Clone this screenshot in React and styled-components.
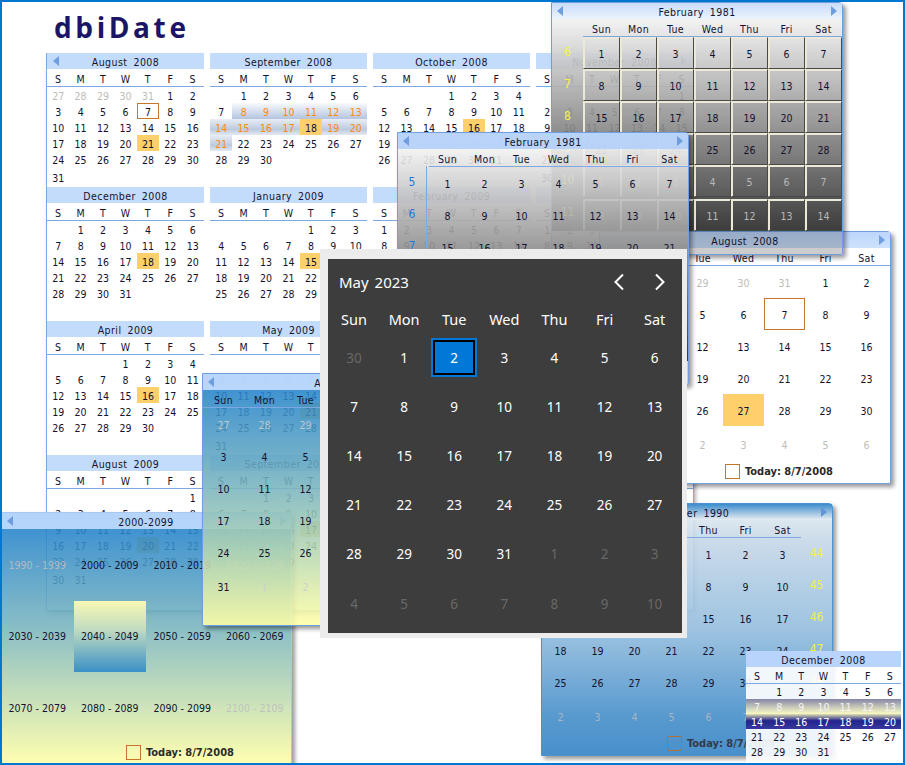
import React from "react";
import styled, { createGlobalStyle, css } from "styled-components";

const Global = createGlobalStyle`
  html, body { margin: 0; padding: 0; background: #fff; }
  #root { width: 905px; height: 765px; }
`;

const UI_FONT = `"DejaVu Sans Condensed", "DejaVu Sans", Tahoma, sans-serif`;
const INK = "#14122e";
const LINE = "#7ea8e2";

const Desktop = styled.div`
  position: relative;
  width: 905px;
  height: 765px;
  overflow: hidden;
  background: #fff;
  font-family: ${UI_FONT};
  font-size: 10.5px;
  color: ${INK};
  &::after {
    content: "";
    position: absolute;
    inset: 0;
    border: 2px solid #0078d0;
    z-index: 50;
    pointer-events: none;
  }
`;

const Brand = styled.h1`
  margin: 0;
  height: 53px;
  box-sizing: border-box;
  padding: 10px 0 0 54px;
  font-family: "Open Sans", "DejaVu Sans", sans-serif;
  font-weight: 700;
  font-size: 28px;
  line-height: 34px;
  letter-spacing: 3.6px;
  color: #1c1464;
`;

const Sheet = styled.div`
  display: grid;
  grid-template-columns: repeat(4, 157px);
  column-gap: 6px;
  width: 646px;
  margin-left: 46px;
  padding-bottom: 21px;
  border-left: 1px solid ${LINE};
  border-right: 1px solid ${LINE};
  border-bottom: 1px solid ${LINE};
  box-shadow: 2px 3px 4px rgba(0, 0, 0, 0.3);
`;

const MiniMonth = styled.section`
  height: 134px;
`;

const MonthBar = styled.div`
  position: relative;
  height: 16px;
  box-sizing: border-box;
  padding-top: 1px;
  display: flex;
  align-items: center;
  justify-content: center;
  background: ${(p) => p.$bg || "#c4dcfc"};
  letter-spacing: 0.45px;
  word-spacing: 2.5px;
  white-space: nowrap;
`;

const ArrowSlot = styled.svg`
  position: absolute;
  top: ${(p) => p.$top ?? 3}px;
  ${(p) => (p.$side === "left" ? css`left: ${p.$inset ?? 6}px;` : css`right: ${p.$inset ?? 6}px;`)}
  fill: ${(p) => p.$color || "#6f9ddf"};
`;

const Arrow = ({ side, top, inset, color }) => (
  <ArrowSlot $side={side} $top={top} $inset={inset} $color={color} width="6" height="10" viewBox="0 0 6 10">
    <polygon points={side === "left" ? "6,0 6,10 0,5" : "0,0 0,10 6,5"} />
  </ArrowSlot>
);

const DowRow = styled.div`
  display: grid;
  grid-template-columns: repeat(7, ${(p) => p.$cw});
  height: ${(p) => p.$h || 18}px;
  box-sizing: border-box;
  margin-left: ${(p) => p.$left || 0}px;
  margin-right: ${(p) => p.$right || 0}px;
  padding-top: 2px;
  border-bottom: 1px solid ${LINE};
  align-items: center;
  justify-items: center;
`;

const Dow = styled.span`
  letter-spacing: 0.35px;
`;

const DayGrid = styled.div`
  display: grid;
  grid-template-columns: repeat(7, ${(p) => p.$cw});
  grid-auto-rows: ${(p) => p.$rh}px;
`;

const bands = {
  soft: css`background: linear-gradient(#f8fafd, #b4c4de); color: #ff8a0c;`,
  softLast: css`background: linear-gradient(#e8edf5, #bccade 65%, #e4e9f2); color: #ff8a0c;`,
  neonTop: css`background: linear-gradient(#8585a8, #c9c9b8 55%, #fbfbc4); color: #f4f4f4;`,
  neonBottom: css`background: linear-gradient(#e0e0b0, #23238e 45%, #3838a0); color: #fff;`,
};

const Day = styled.div`
  box-sizing: border-box;
  height: ${(p) => p.$rh}px;
  display: flex;
  align-items: center;
  justify-content: center;
  padding-top: ${(p) => p.$pad ?? 2}px;
  color: ${(p) => (p.$other ? p.$otherColor || "#bdbdb6" : "inherit")};
  margin-top: ${(p) => (p.$gap ? 2 : 0)}px;
  ${(p) => p.$band && bands[p.$band]}
  ${(p) => p.$selected && css`background: #fdd06c; color: #14122e;`}
  ${(p) => p.$today && css`outline: 1px solid #c4762a; outline-offset: -1px;`}
  ${(p) =>
    p.$bevel &&
    css`
      background: rgba(255, 255, 255, 0.03);
      border: 1px solid #ece9d8;
      border-right-color: #4a4a44;
      border-bottom-color: #4a4a44;
      box-shadow: inset 1px 1px 0 #ece9d8;
    `}
`;

const Window = styled.section`
  position: absolute;
  left: ${(p) => p.$x}px;
  top: ${(p) => p.$y}px;
  z-index: ${(p) => p.$z};
  width: 292px;
  height: ${(p) => p.$h || 253}px;
  box-sizing: border-box;
  display: flex;
  flex-direction: column;
  border: 1px solid ${(p) => p.$edge || "#6f9fe0"};
  border-top-right-radius: 4px;
  border-bottom-right-radius: 2px;
  background: ${(p) => p.$bg};
  box-shadow: 3px 3px 4px rgba(0, 0, 0, 0.4);
`;

const WinBody = styled.div`
  display: flex;
`;

const WeekCol = styled.div`
  width: ${(p) => (p.$rule ? 28 : 31)}px;
  margin-right: ${(p) => (p.$rule ? 2 : 0)}px;
  margin-top: -1px;
  display: grid;
  grid-auto-rows: 32px;
  justify-items: center;
  align-items: center;
  border-right: ${(p) => (p.$rule ? `1px solid ${LINE}` : "none")};
  color: ${(p) => p.$color};
  font-size: 12px;
`;

const TodayRow = styled.div`
  margin-top: auto;
  margin-bottom: 4px;
  padding-left: 125px;
  height: 16px;
  display: flex;
  align-items: center;
  gap: 5px;
  font-weight: 700;
  font-size: 11px;
  color: ${(p) => p.$color || "#2a2a2a"};
`;

const TodayBox = styled.span`
  width: 15px;
  height: 15px;
  box-sizing: border-box;
  border: 1px solid ${(p) => p.$color || "#c4762a"};
`;

const DecadeGrid = styled.div`
  display: grid;
  grid-template-columns: repeat(4, 72.5px);
  grid-auto-rows: 71.5px;
`;

const Decade = styled.div`
  display: flex;
  align-items: center;
  justify-content: center;
  color: ${(p) => (p.$other ? "rgba(190,190,190,.9)" : INK)};
  ${(p) => p.$selected && css`background: linear-gradient(#f8f8b4, #c2dcc0 40%, #3a90c8);`}
`;

const Popup = styled.section`
  position: absolute;
  left: 320px;
  top: 249px;
  z-index: 20;
  width: 367px;
  height: 389px;
  box-sizing: border-box;
  padding: 10px 5px 5px 8px;
  background: #ececec;
`;

const PopupPanel = styled.div`
  height: 100%;
  box-sizing: border-box;
  background: #3d3d3d;
  color: #fff;
  font-family: "Noto Sans", "Open Sans", sans-serif;
  font-size: 13.5px;
  padding-left: 1px;
`;

const PopupHead = styled.header`
  height: 45px;
  display: flex;
  align-items: center;
  justify-content: space-between;
  padding: 1px 16px 0 10px;
  box-sizing: border-box;
  font-size: 15px;
  word-spacing: 2px;
`;

const Nav = styled.nav`
  display: flex;
  gap: 29px;
  margin-top: -1px;
`;

const Chevrons = styled.svg`
  fill: none;
  stroke: #fff;
  stroke-width: 2;
  display: block;
`;

const PopupDows = styled.div`
  display: grid;
  grid-template-columns: repeat(7, 50.1px);
  height: 29px;
  align-items: center;
  justify-items: center;
  font-size: 14.5px;
`;

const PopupGrid = styled.div`
  display: grid;
  grid-template-columns: repeat(7, 50.1px);
  grid-auto-rows: 49px;
  justify-items: center;
  align-items: center;
`;

const PopupDay = styled.div`
  box-sizing: border-box;
  width: 46px;
  height: 39px;
  display: flex;
  align-items: center;
  justify-content: center;
  color: ${(p) => (p.$other ? "#686868" : "#fff")};
  margin-top: ${(p) => (p.$gap ? 3 : 0)}px;
  ${(p) =>
    p.$selected &&
    css`
      background: #0078d7;
      box-shadow: inset 0 0 0 2px #0078d7, inset 0 0 0 4px #000;
    `}
`;

const Small = styled.section`
  position: absolute;
  left: 746px;
  top: 651px;
  z-index: 30;
  width: 155px;
  height: 114px;
  background: rgba(255, 255, 255, 0.9);
`;

const HEAD_SHORT = ["S", "M", "T", "W", "T", "F", "S"];
const HEAD_LONG = ["Sun", "Mon", "Tue", "Wed", "Thu", "Fri", "Sat"];
const NAMES = ["January", "February", "March", "April", "May", "June", "July", "August", "September", "October", "November", "December"];

const SKY = "linear-gradient(rgba(24,124,204,.88), rgba(120,180,190,.88) 45%, rgba(255,255,165,.88))";

function monthCells(year, month) {
  const first = new Date(year, month, 1);
  const start = 1 - first.getDay();
  const out = [];
  for (let i = 0; i < 42; i++) {
    const d = new Date(year, month, start + i);
    out.push({ n: d.getDate(), other: d.getMonth() !== month, row: Math.floor(i / 7), date: d });
  }
  return out;
}

function thirdThursday(year, month) {
  const w = new Date(year, month, 1).getDay();
  return 1 + ((4 - w + 7) % 7) + 14;
}

const MONTHS = [
  [2008, 7], [2008, 8], [2008, 9], [2008, 10],
  [2008, 11], [2009, 0], [2009, 1], [2009, 2],
  [2009, 3], [2009, 4], [2009, 5], [2009, 6],
  [2009, 7], [2009, 8], [2009, 9], [2009, 10],
];

function sepBand(y, m, n) {
  if (y !== 2008 || m !== 8) return null;
  if (n >= 8 && n <= 13) return "soft";
  if (n >= 14 && n <= 21) return "softLast";
  return null;
}

function SheetMonth({ year, month, index }) {
  const sel = thirdThursday(year, month);
  const cells = monthCells(year, month).filter((c) => c.row < 6);
  const showOther = index === 0;
  return (
    <MiniMonth>
      <MonthBar>
        {index === 0 && <Arrow side="left" />}
        {NAMES[month]}  {year}
        {index === 3 && <Arrow side="right" />}
      </MonthBar>
      <DowRow $cw="1fr" $h={18}>
        {HEAD_SHORT.map((d, i) => <Dow key={i}>{d}</Dow>)}
      </DowRow>
      <DayGrid $cw="1fr" $rh={16}>
        {cells.map((c, i) => {
          if (c.other && !(showOther && c.row === 0)) return <div key={i} />;
          return (
            <Day
              key={i}
              $rh={16}
              $gap={c.row === 5}
              $other={c.other}
              $selected={!c.other && c.n === sel}
              $today={year === 2008 && month === 7 && c.n === 7 && !c.other}
              $band={!c.other ? sepBand(year, month, c.n) : null}
            >
              {c.n}
            </Day>
          );
        })}
      </DayGrid>
    </MiniMonth>
  );
}

function CalendarWindow({
  x, y, z, bg, headBg, edge, year, month, cw = 37, week, weekSide, weekRule, weekColor,
  bevel, other, today, selected, footer, footerColor, boxColor, arrows = ["left", "right"], arrowColor,
}) {
  const cells = monthCells(year, month);
  const left = weekSide === "left" ? 31 : 0;
  const right = weekSide === "right" ? 31 : 0;
  const weeks = week ? Array.from({ length: 6 }, (_, i) => week + i) : null;
  const wk = weeks && (
    <WeekCol $rule={weekRule} $color={weekColor}>
      {weeks.map((n) => <span key={n}>{n}</span>)}
    </WeekCol>
  );
  return (
    <Window $x={x} $y={y} $z={z} $bg={bg} $edge={edge}>
      <MonthBar $bg={headBg}>
        {arrows.includes("left") && <Arrow side="left" inset={5} color={arrowColor} />}
        {NAMES[month]}  {year}
        {arrows.includes("right") && <Arrow side="right" inset={5} color={arrowColor} />}
      </MonthBar>
      <DowRow $cw={`${cw}px`} $left={left} $right={right}>
        {HEAD_LONG.map((d) => <Dow key={d}>{d}</Dow>)}
      </DowRow>
      <WinBody>
        {weekSide === "left" && wk}
        <DayGrid $cw={`${cw}px`} $rh={32}>
          {cells.map((c, i) => (
            <Day
              key={i}
              $rh={32}
              $gap={c.row === 5}
              $other={c.other}
              $otherColor={other}
              $bevel={bevel}
              $selected={!c.other && c.n === selected}
              $today={!c.other && c.n === today}
            >
              {c.n}
            </Day>
          ))}
        </DayGrid>
        {weekSide === "right" && wk}
      </WinBody>
      {footer && (
        <TodayRow $color={footerColor}>
          <TodayBox $color={boxColor} />
          Today: 8/7/2008
        </TodayRow>
      )}
    </Window>
  );
}

const DECADES = [
  ["1990 - 1999", true], ["2000 - 2009"], ["2010 - 2019"], ["2020 - 2029", false, true],
  ["2030 - 2039"], ["2040 - 2049", false, false, true], ["2050 - 2059"], ["2060 - 2069"],
  ["2070 - 2079"], ["2080 - 2089"], ["2090 - 2099"], ["2100 - 2109", true],
];

function DecadeWindow() {
  return (
    <Window $x={0} $y={512} $z={6} $edge="#a9c6ee" $bg={SKY}>
      <MonthBar $bg="rgba(198,222,255,.88)">
        <Arrow side="left" inset={6} />
        2000-2099
        <Arrow side="right" inset={5} />
      </MonthBar>
      <DecadeGrid>
        {DECADES.map(([label, other, faint, selected]) => (
          <Decade key={label} $other={other || faint} $selected={selected}>{label}</Decade>
        ))}
      </DecadeGrid>
      <TodayRow>
        <TodayBox />
        Today: 8/7/2008
      </TodayRow>
    </Window>
  );
}

function DarkPopup() {
  const cells = monthCells(2023, 4);
  return (
    <Popup>
      <PopupPanel>
        <PopupHead>
          <span>May  2023</span>
          <Nav>
            <Chevrons width="12" height="18" viewBox="0 0 12 18"><polyline points="10,1.5 2.5,9 10,16.5" /></Chevrons>
            <Chevrons width="12" height="18" viewBox="0 0 12 18"><polyline points="2,1.5 9.5,9 2,16.5" /></Chevrons>
          </Nav>
        </PopupHead>
        <PopupDows>
          {HEAD_LONG.map((d) => <span key={d}>{d}</span>)}
        </PopupDows>
        <PopupGrid>
          {cells.map((c, i) => (
            <PopupDay key={i} $other={c.other} $gap={c.row === 5} $selected={!c.other && c.n === 2}>{c.n}</PopupDay>
          ))}
        </PopupGrid>
      </PopupPanel>
    </Popup>
  );
}

function SmallDecember() {
  const cells = monthCells(2008, 11).filter((c) => c.row < 5);
  return (
    <Small>
      <MonthBar $bg="#b8d4fc">December  2008</MonthBar>
      <DowRow $cw="1fr" $h={17}>
        {HEAD_SHORT.map((d, i) => <Dow key={i}>{d}</Dow>)}
      </DowRow>
      <DayGrid $cw="1fr" $rh={15}>
        {cells.map((c, i) =>
          c.other && c.row !== 1 && c.row !== 2 ? (
            <div key={i} />
          ) : (
            <Day key={i} $rh={15} $pad={1} $band={c.row === 1 ? "neonTop" : c.row === 2 ? "neonBottom" : null}>
              {c.n}
            </Day>
          )
        )}
      </DayGrid>
    </Small>
  );
}

const GRAY =
  "linear-gradient(rgba(240,240,240,.9) 7%, rgba(36,36,36,.92) 91%, rgba(0,0,0,.2) 91%, rgba(0,0,0,.2))";

export default function App() {
  return (
    <>
      <Global />
      <Desktop>
        <Brand>dbiDate</Brand>
        <Sheet>
          {MONTHS.map(([y, m], i) => <SheetMonth key={i} index={i} year={y} month={m} />)}
        </Sheet>

        <CalendarWindow
          x={599} y={231} z={1} bg="#fff" cw={41} year={2008} month={7}
          today={7} selected={27} footer headBg="linear-gradient(#bcd6fb,#cde2fd)" arrows={["right"]}
        />
        <CalendarWindow
          x={551} y={2} z={2} bg={GRAY} year={1981} month={1} bevel week={6} weekSide="left"
          weekColor="#f6f63c" other="#b9b9b9" headBg="linear-gradient(rgba(198,220,250,.95),rgba(235,242,252,.9))"
        />
        <CalendarWindow
          x={397} y={132} z={3} bg={GRAY} year={1981} month={1} week={5} weekSide="left" weekRule
          weekColor="#1a7be0" headBg="rgba(176,206,250,.85)"
        />
        <CalendarWindow
          x={541} y={503} z={4} year={1990} month={10} week={44} weekSide="right" weekColor="#f2f23c"
          edge="#4a92d0" other="#a8b4c0" footer footerColor="#323a48" boxColor="#b07038" arrowColor="#5f96d8"
          bg="linear-gradient(rgba(232,238,242,.92), rgba(198,216,232,.92) 15%, rgba(150,190,222,.92) 50%, rgba(78,148,204,.95) 85%, rgba(63,138,200,.95))"
          headBg="linear-gradient(#3d8ccd, #e8eef2)"
        />
        <DecadeWindow />
        <CalendarWindow
          x={202} y={373} z={7} cw={41} year={2008} month={7} today={-1}
          bg={SKY} headBg="rgba(198,222,255,.9)" other="rgba(205,205,205,.9)"
          selected={-1} arrows={["left"]}
        />
        <DarkPopup />
        <SmallDecember />
      </Desktop>
    </>
  );
}
